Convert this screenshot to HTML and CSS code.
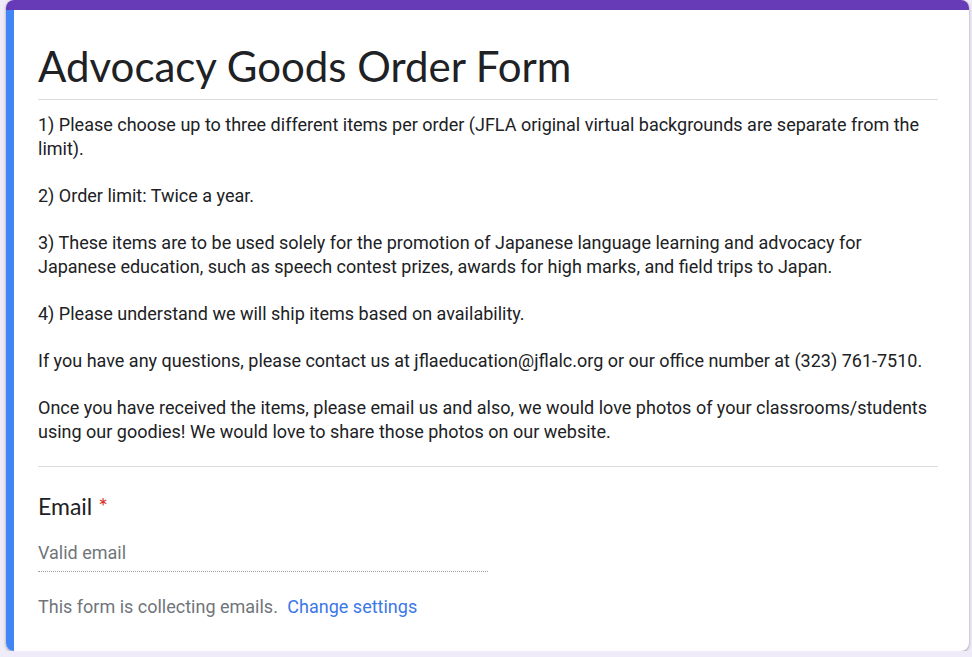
FILE: index.html
```html
<!DOCTYPE html>
<html>
  <head>
    <meta name="viewport" content="width=device-width, initial-scale=1" />
    <link rel="stylesheet" href="styles.css">
  </head>
  <body>
    <div class="card">
      <div class="card-top"></div>
      <div class="card-body">
        <div class="header">
          <h1 class="title">Advocacy Goods Order Form</h1>
        </div>
        <div class="description">
          <p>1) Please choose up to three different items per order (JFLA original virtual backgrounds are separate from the limit).</p>
          <p>2) Order limit: Twice a year.</p>
          <p>3) These items are to be used solely for the promotion of Japanese language learning and advocacy for Japanese education, such as speech contest prizes, awards for high marks, and field trips to Japan.</p>
          <p>4) Please understand we will ship items based on availability.</p>
          <p>If you have any questions, please contact us at jflaeducation@jflalc.org or our office number at (323) 761-7510.</p>
          <p>Once you have received the items, please email us and also, we would love photos of your classrooms/students using our goodies! We would love to share those photos on our website.</p>
        </div>

        <div class="question">
          <label for="email" class="question-title">Email <span class="required">*</span></label>
          <input type="text" id="email" name="email" placeholder="Valid email" class="email-input" />
          <div class="collect-note">
            This form is collecting emails.
            <a href="#" class="settings-link">Change settings</a>
          </div>
        </div>
      </div>
    </div>
  </body>
</html>
```

FILE: styles.css
```css
body {
  margin: 0;
  font-family: Roboto, Arial, Helvetica, sans-serif;
  background-color: #f0ebf8;
  color: #202124;
}

* {
  box-sizing: border-box;
}

/* Form card with the coloured top bar */
.card {
  margin: 0 3px 0 6px;
  background-color: white;
  border-radius: 8px;
  overflow: hidden;
  box-shadow: 0 1px 2px rgba(60, 64, 67, 0.3), 0 1px 3px 1px rgba(60, 64, 67, 0.15);
}

.card-top {
  height: 10px;
  background-color: #673ab7;
}

.card-body {
  border-left: 8px solid #4285f4;
  padding: 0 31px 32px 24px;
}

/* Title */
.header {
  padding: 32px 0 9px 0;
  border-bottom: 1px solid #dadce0;
}

.title {
  margin: 0;
  font-family: Lato, "Open Sans", sans-serif;
  font-weight: 400;
  font-size: 42px;
  line-height: 48px;
  color: #202124;
}

/* Description text */
.description {
  padding: 13px 0 23px 0;
  border-bottom: 1px solid #dadce0;
  font-size: 18px;
  line-height: 23.6px;
}

.description p {
  margin: 0 0 23.6px 0;
}

.description p:last-child {
  margin-bottom: 0;
}

/* Email question */
.question {
  padding-top: 25px;
}

.question-title {
  display: block;
  font-family: Lato, "Open Sans", sans-serif;
  font-size: 23px;
  line-height: 28px;
  color: #202124;
}

.required {
  color: #d93025;
}

.email-input {
  display: block;
  width: 450px;
  margin-top: 21px;
  padding: 0 0 6px 0;
  border: none;
  border-bottom: 1px dotted #9aa0a6;
  font-family: Roboto, Arial, sans-serif;
  font-size: 18px;
  line-height: 24px;
  color: #202124;
  background: transparent;
}

.email-input::placeholder {
  color: #70757a;
}

.email-input:focus {
  outline: none;
}

.collect-note {
  margin-top: 23px;
  font-size: 18px;
  line-height: 24px;
  color: #70757a;
}

.settings-link {
  margin-left: 5px;
  color: #3b78e7;
  text-decoration: none;
}
```
